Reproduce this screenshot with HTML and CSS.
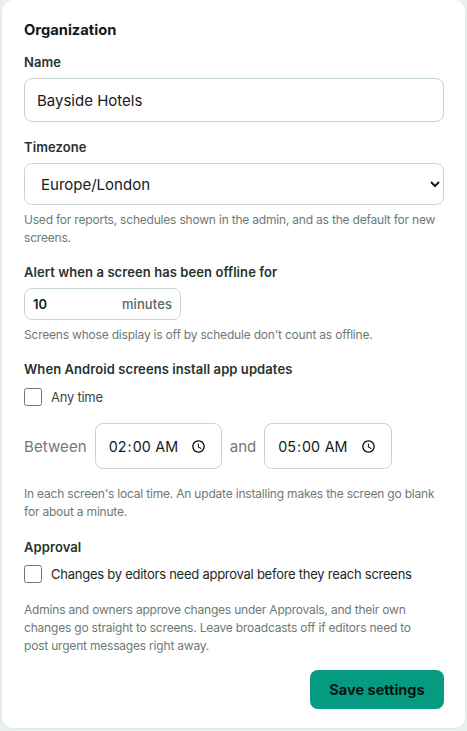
FILE: index.html
```html
<!doctype html>
<html lang="en">
<head>
    <meta charset="UTF-8">
    <title>Organization settings</title>
    <link rel="stylesheet" href="styles.css">
</head>
<body>
<form class="card">
    <h2>Organization</h2>

    <label class="label" for="name">Name</label>
    <input class="field name-field" id="name" type="text" value="Bayside Hotels">

    <label class="label tz-label" for="tz">Timezone</label>
    <select class="field tz-field" id="tz">
        <option>Europe/London</option>
    </select>
    <p class="hint tz-hint">Used for reports, schedules shown in the admin, and as the default for new screens.</p>

    <label class="label alert-label" for="offline">Alert when a screen has been offline for</label>
    <div class="minutes">
        <input id="offline" type="text" value="10">
        <span>minutes</span>
    </div>
    <p class="hint minutes-hint">Screens whose display is off by schedule don't count as offline.</p>

    <div class="label updates-label">When Android screens install app updates</div>
    <label class="check">
        <input type="checkbox">
        <span class="any">Any time</span>
    </label>
    <div class="between">
        <span class="between-word">Between</span>
        <input class="field time-field" type="time" value="02:00">
        <span>and</span>
        <input class="field time-field time-end" type="time" value="05:00">
    </div>
    <p class="hint time-hint">In each screen's local time. An update installing makes the screen go blank for about a minute.</p>

    <div class="label approval-label">Approval</div>
    <label class="check approval-check">
        <input type="checkbox">
        <span>Changes by editors need approval before they reach screens</span>
    </label>
    <p class="hint approval-hint">Admins and owners approve changes under Approvals, and their own changes go straight to screens. Leave broadcasts off if editors need to post urgent messages right away.</p>

    <div class="actions">
        <button type="button" class="save">Save settings</button>
    </div>
</form>
</body>
</html>
```

FILE: styles.css
```css
*{
    box-sizing: border-box;
}
body{
    margin:0;
    background-color: #e9f2ef;
    font-family: "Inter", "Liberation Sans", sans-serif;
    color:#14201d;
}
.card{
    width:465px;
    height:729px;
    margin:0 1px;
    padding:20px 21px 0 22px;
    background-color: #fff;
    border:1px solid #dfeae7;
    border-top-width:0;
    border-radius:12px;
}
h2{
    margin:0;
    font-size:14.7px;
    line-height:20px;
    font-weight:700;
    color:#111a18;
}
.label{
    display:block;
    font-size:13px;
    line-height:18px;
    font-weight:600;
    letter-spacing:.08px;
    color:#28332f;
}
h2 + .label{
    margin-top:13px;
}
.field{
    display:block;
    width:420px;
    border:1px solid #c4d6d1;
    border-radius:8px;
    background-color: #fff;
    color:#14201d;
    font-family:inherit;
    font-size:15px;
}
.name-field{
    height:44px;
    margin-top:7px;
    padding:0 12px;
}
.tz-label{
    margin-top:16px;
}
.tz-field{
    height:42px;
    margin-top:7px;
    padding:0 12px;
}
.hint{
    margin:0;
    font-size:12px;
    line-height:18px;
    letter-spacing:-.2px;
    color:#6c7a76;
}
.tz-hint{
    margin-top:6px;
}
.alert-label{
    margin-top:16px;
}
.minutes{
    display:flex;
    align-items:center;
    justify-content:space-between;
    width:157px;
    height:32px;
    margin-top:7px;
    padding:0 8px;
    border:1px solid #c4d6d1;
    border-radius:8px;
    font-size:13px;
    font-weight:500;
    letter-spacing:.1px;
    color:#5a6865;
}
.minutes input{
    width:60px;
    border:0;
    padding:0;
    outline:0;
    font:inherit;
    font-weight:600;
    color:#14201d;
}
.minutes-hint{
    margin-top:6px;
}
.updates-label{
    margin-top:16px;
}
.check{
    display:flex;
    align-items:center;
    gap:9px;
    margin-top:10px;
    font-size:13px;
    line-height:18px;
    letter-spacing:-.25px;
    color:#1c2825;
}
.check input{
    width:18px;
    height:18px;
    margin:0;
}
.any{
    color:#3a4643;
}
.between{
    display:flex;
    align-items:center;
    gap:8px;
    margin-top:17px;
    font-size:15px;
    color:#6c7a76;
}
.between-word{
    letter-spacing:.1px;
}
.time-field{
    width:127px;
    height:46px;
    padding:0 12px 0 12px;
    font-size:14.3px;
}
.time-end{
    width:128px;
}
.time-hint{
    margin-top:16px;
}
.approval-label{
    margin-top:17px;
}
.approval-check{
    margin-top:9px;
}
.approval-hint{
    max-width:400px;
    margin-top:18px;
}
.actions{
    display:flex;
    justify-content:flex-end;
    margin-top:15px;
}
.save{
    width:134px;
    height:39px;
    border:0;
    border-radius:8px;
    background-color: #059b80;
    color:#04140f;
    font-family:inherit;
    font-size:14.5px;
    font-weight:700;
}
```
